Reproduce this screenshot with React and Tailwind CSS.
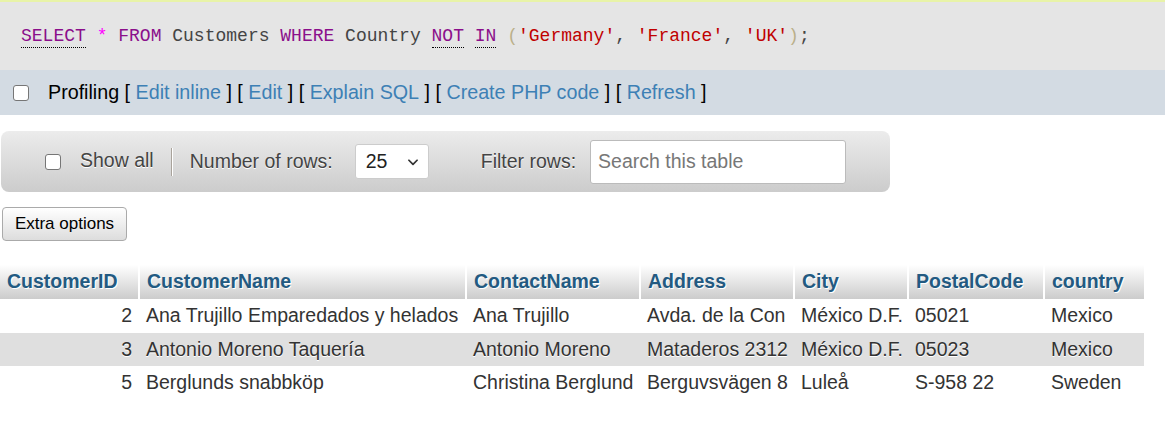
import { useState } from 'react'

const rows = [
  { id: 2, name: 'Ana Trujillo Emparedados y helados', contact: 'Ana Trujillo', address: 'Avda. de la Con', city: 'México D.F.', postal: '05021', country: 'Mexico' },
  { id: 3, name: 'Antonio Moreno Taquería', contact: 'Antonio Moreno', address: 'Mataderos 2312', city: 'México D.F.', postal: '05023', country: 'Mexico' },
  { id: 5, name: 'Berglunds snabbköp', contact: 'Christina Berglund', address: 'Berguvsvägen 8', city: 'Luleå', postal: 'S-958 22', country: 'Sweden' },
]

const columns = ['CustomerID', 'CustomerName', 'ContactName', 'Address', 'City', 'PostalCode', 'country']
const gridCols = 'grid grid-cols-[140px_327px_174px_154px_114px_136px_99px]'

const Checkbox = ({ checked, onChange, className = '' }) => (
  <span
    role="checkbox"
    aria-checked={checked}
    onClick={() => onChange(!checked)}
    className={`block shrink-0 w-[16px] h-[16px] rounded-[3px] border border-[#767676] cursor-pointer ${checked ? 'bg-[#0075ff] border-[#0075ff]' : 'bg-white'} ${className}`}
  />
)

const Link = ({ children }) => (
  <>
    <span className="text-black">[ </span>
    <a href="#" className="text-[#3d80b5]">{children}</a>
    <span className="text-black"> ] </span>
  </>
)

const App = () => {
  const [profiling, setProfiling] = useState(false)
  const [showAll, setShowAll] = useState(false)
  const [search, setSearch] = useState('')

  return (
    <div className="w-[1165px] h-[424px] bg-white overflow-hidden font-['Liberation_Sans',Arial,sans-serif]">
      {/* sql query */}
      <div className="h-[70px] bg-[#e5e5e5] border-t-2 border-[#e8f3a8] flex items-center pl-[21px] font-['Liberation_Mono',monospace] text-[18px] text-[#444] whitespace-pre">
        <span className="text-[#8b0f8b] border-b border-dotted border-black leading-[22px]">SELECT</span>
        <span> </span>
        <span className="text-[#ff00ff]">*</span>
        <span> </span>
        <span className="text-[#8b0f8b]">FROM</span>
        <span> Customers </span>
        <span className="text-[#8b0f8b]">WHERE</span>
        <span> Country </span>
        <span className="text-[#8b0f8b] border-b border-dotted border-black leading-[22px]">NOT</span>
        <span> </span>
        <span className="text-[#8b0f8b] border-b border-dotted border-black leading-[22px]">IN</span>
        <span> </span>
        <span className="text-[#bbb08a]">(</span>
        <span className="text-[#c00000]">'Germany'</span>
        <span>, </span>
        <span className="text-[#c00000]">'France'</span>
        <span>, </span>
        <span className="text-[#c00000]">'UK'</span>
        <span className="text-[#bbb08a]">)</span>
        <span>;</span>
      </div>

      {/* profiling bar */}
      <div className="h-[45px] bg-[#d3dbe3] flex items-center pl-[13px] text-[19.7px] whitespace-pre">
        <Checkbox checked={profiling} onChange={setProfiling} className="mr-[19px]" />
        <span className="text-black">Profiling </span>
        <Link>Edit inline</Link>
        <Link>Edit</Link>
        <Link>Explain SQL</Link>
        <Link>Create PHP code</Link>
        <Link>Refresh</Link>
      </div>

      {/* navigation */}
      <div className="mt-[16px] ml-[1px] w-[889px] h-[61px] rounded-[8px] bg-gradient-to-b from-[#ececec] to-[#cccccc] flex items-center text-[19.5px] text-[#444] [text-shadow:0_1px_0_#fff]">
        <Checkbox checked={showAll} onChange={setShowAll} className="ml-[44px] mr-[19px]" />
        <span className="-mt-[2px]">Show all</span>
        <div className="w-[2px] h-[28px] bg-[#a9a39b] ml-[17px] mr-[17px] border-r border-white" />
        <span>Number of rows:</span>
        <div className="ml-[22px] w-[74px] h-[35px] bg-white border border-[#ccc] rounded-[3px] flex items-center justify-between pl-[10px] pr-[8px] text-[#222] [text-shadow:none]">
          <span>25</span>
          <svg width="14" height="14" viewBox="0 0 24 24" fill="none" stroke="#333" strokeWidth="3" strokeLinecap="round" strokeLinejoin="round">
            <path d="M5 9l7 7 7-7" />
          </svg>
        </div>
        <span className="ml-[52px]">Filter rows:</span>
        <input
          value={search}
          onChange={(e) => setSearch(e.target.value)}
          placeholder="Search this table"
          className="ml-[14px] w-[256px] h-[44px] bg-white border border-[#bbb] rounded-[3px] px-[7px] text-[19.5px] text-[#222] placeholder:text-[#777] outline-none [text-shadow:none]"
        />
      </div>

      {/* extra options */}
      <button className="mt-[15px] ml-[2px] w-[125px] h-[34px] rounded-[4px] border border-[#aaa] bg-gradient-to-b from-white to-[#dddddd] text-[17px] text-black">
        Extra options
      </button>

      {/* results table */}
      <div className="mt-[24px] w-[1144px]">
        <div className={`${gridCols} h-[34px] bg-gradient-to-b from-white to-[#cccccc]`}>
          {columns.map((col, i) => (
            <div
              key={col}
              className={`flex items-center pl-[7px] font-bold text-[19.5px] text-[#235a81] [text-shadow:1px_1px_0_#fff] ${i < columns.length - 1 ? 'border-r-2 border-white' : ''}`}
            >
              {col}
            </div>
          ))}
        </div>
        {rows.map((r, i) => (
          <div
            key={r.id}
            className={`${gridCols} h-[33.5px] text-[19.5px] text-[#333] [text-shadow:0_1px_0_#fff] ${i % 2 === 1 ? 'bg-[#dfdfdf]' : 'bg-white'}`}
          >
            <div className="flex items-center justify-end pr-[8px]">{r.id}</div>
            <div className="flex items-center pl-[6px] whitespace-nowrap">{r.name}</div>
            <div className="flex items-center pl-[6px] whitespace-nowrap">{r.contact}</div>
            <div className="flex items-center pl-[6px] whitespace-nowrap">{r.address}</div>
            <div className="flex items-center pl-[6px] whitespace-nowrap">{r.city}</div>
            <div className="flex items-center pl-[6px] whitespace-nowrap">{r.postal}</div>
            <div className="flex items-center pl-[6px] whitespace-nowrap">{r.country}</div>
          </div>
        ))}
      </div>
    </div>
  )
}

export default App
